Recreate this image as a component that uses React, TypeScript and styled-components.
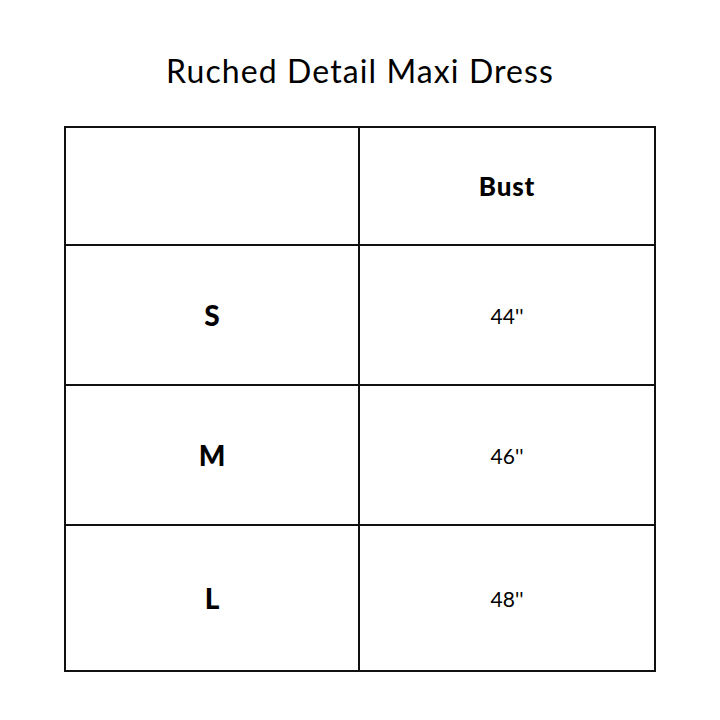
import styled, { createGlobalStyle } from "styled-components"

const GlobalStyle = createGlobalStyle`
  html, body {
    margin: 0;
    padding: 0;
    background: #ffffff;
  }
`

const Page = styled.div`
  width: 720px;
  height: 720px;
  display: flex;
  flex-direction: column;
  align-items: center;
  background: #fff;
  color: #000;
`

const Title = styled.h1`
  margin: 0;
  height: 126px;
  padding-top: 51px;
  box-sizing: border-box;
  font-family: "Lato", "Liberation Sans", sans-serif;
  font-weight: 400;
  font-size: 32px;
  line-height: 40px;
  letter-spacing: 1.1px;
`

const Chart = styled.table`
  width: 592px;
  border-collapse: collapse;
  table-layout: fixed;
`

const Row = styled.tr<{ $h: number }>`
  height: ${(p) => p.$h}px;
`

const Cell = styled.td<{ $w?: number }>`
  border: 2px solid #111;
  padding: 0;
  text-align: center;
  vertical-align: middle;
  ${(p) => (p.$w ? `width: ${p.$w}px;` : "")}
`

const HeadLabel = styled.span`
  font-family: "Lato", "Liberation Sans", sans-serif;
  font-weight: 900;
  font-size: 26px;
  letter-spacing: 0.8px;
`

const SizeLabel = styled.span`
  font-family: "Lato", "Liberation Sans", sans-serif;
  font-weight: 900;
  font-size: 28px;
`

const Value = styled.span`
  font-family: "Lato", "Liberation Sans", sans-serif;
  font-weight: 400;
  font-size: 21px;
`

const SIZES = [
  { size: "S", bust: "44''", h: 140 },
  { size: "M", bust: "46''", h: 140 },
  { size: "L", bust: "48''", h: 146 }
]

const App = () => {
  return (
    <>
      <GlobalStyle />
      <Page>
        <Title>Ruched Detail Maxi Dress</Title>
        <Chart>
          <tbody>
            <Row $h={118}>
              <Cell $w={292}></Cell>
              <Cell>
                <HeadLabel>Bust</HeadLabel>
              </Cell>
            </Row>
            {SIZES.map((s) => (
              <Row key={s.size} $h={s.h}>
                <Cell>
                  <SizeLabel>{s.size}</SizeLabel>
                </Cell>
                <Cell>
                  <Value>{s.bust}</Value>
                </Cell>
              </Row>
            ))}
          </tbody>
        </Chart>
      </Page>
    </>
  )
}

export default App
